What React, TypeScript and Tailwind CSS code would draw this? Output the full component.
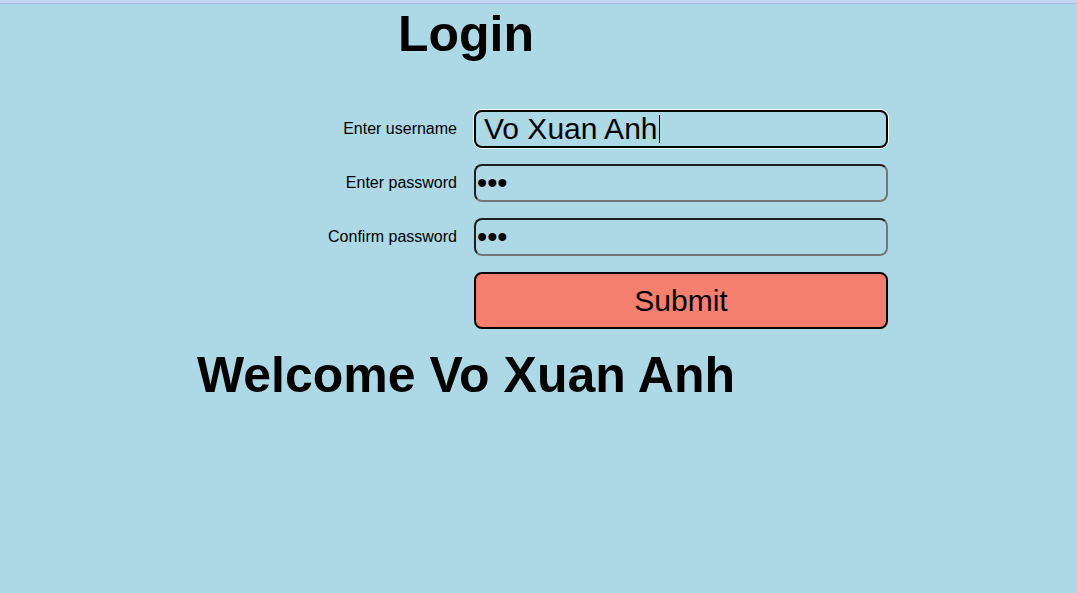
import React from "react";

export default function App() {
  const font = { fontFamily: '"Liberation Sans", Arial, sans-serif' };
  return (
    <div className="min-h-[593px] w-full bg-[#add8e6] text-black" style={font}>
      <div className="h-[3px] bg-[#c6d5f2]" />
      <div className="h-px bg-[#a8b9e2]" />
      <div className="w-[932px] pt-[1px]">
        <h1 className="text-center text-[50px] font-bold leading-[58px]">Login</h1>
      </div>
      <div className="mt-[47px] grid grid-cols-[457px_414px] gap-x-[17px] gap-y-[16px]">
        <label className="flex items-center justify-end text-[16px]">Enter username</label>
        <div className="flex h-[38px] items-center rounded-[8px] border-2 border-black pl-[8px] text-[30px] leading-none shadow-[0_0_0_1px_#ffffff]">
          <span>Vo Xuan Anh</span>
          <span className="ml-px inline-block h-[28px] w-px bg-black" />
        </div>
        <label className="flex items-center justify-end text-[16px]">Enter password</label>
        <div className="flex h-[38px] items-center rounded-[8px] border-2 border-t-[#1e1e1e] border-l-[#1e1e1e] border-b-[#767676] border-r-[#767676] pl-[1px] text-[29px] leading-none">
          <span>•••</span>
        </div>
        <label className="flex items-center justify-end text-[16px]">Confirm password</label>
        <div className="flex h-[38px] items-center rounded-[8px] border-2 border-t-[#1e1e1e] border-l-[#1e1e1e] border-b-[#767676] border-r-[#767676] pl-[1px] text-[29px] leading-none">
          <span>•••</span>
        </div>
        <div />
        <button className="h-[57px] rounded-[8px] border-2 border-black bg-[#f57f6e] text-[30px]">Submit</button>
      </div>
      <div className="w-[932px] pt-[17px]">
        <h1 className="text-center text-[50px] font-bold leading-[58px]">Welcome Vo Xuan Anh</h1>
      </div>
    </div>
  );
}
